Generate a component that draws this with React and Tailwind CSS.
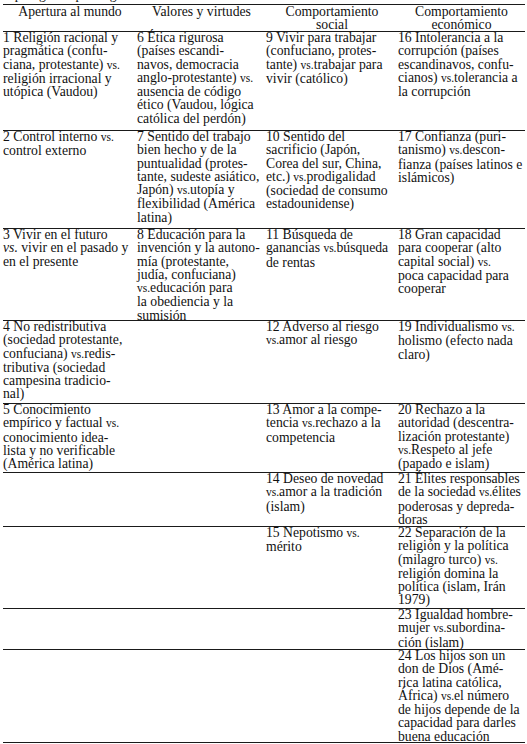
import React from 'react';

const rows = [
  {
    h: 'h-[99px]',
    cells: [
      ['1 Religión racional y', 'pragmática (confu-', 'ciana, protestante) vs.', 'religión irracional y', 'utópica (Vaudou)'],
      ['6 Ética rigurosa', '(países escandi-', 'navos, democracia', 'anglo-protestante) vs.', 'ausencia de código', 'ético (Vaudou, lógica', 'católica del perdón)'],
      ['9 Vivir para trabajar', '(confuciano, protes-', 'tante) vs.trabajar para', 'vivir (católico)'],
      ['16 Intolerancia a la', 'corrupción (países', 'escandinavos, confu-', 'cianos) vs.tolerancia a', 'la corrupción'],
    ],
  },
  {
    h: 'h-[98px]',
    cells: [
      ['2 Control interno vs.', 'control externo'],
      ['7 Sentido del trabajo', 'bien hecho y de la', 'puntualidad (protes-', 'tante, sudeste asiático,', 'Japón) vs.utopía y', 'flexibilidad (América', 'latina)'],
      ['10 Sentido del', 'sacrificio (Japón,', 'Corea del sur, China,', 'etc.) vs.prodigalidad', '(sociedad de consumo', 'estadounidense)'],
      ['17 Confianza (puri-', 'tanismo) vs.descon-', 'fianza (países latinos e', 'islámicos)'],
    ],
  },
  {
    h: 'h-[92px]',
    cells: [
      ['3 Vivir en el futuro', '_vs. vivir en el pasado y', 'en el presente'],
      ['8 Educación para la', 'invención y la autono-', 'mía (protestante,', 'judía, confuciana)', 'vs.educación para', 'la obediencia y la', 'sumisión'],
      ['11 Búsqueda de', 'ganancias vs.búsqueda', 'de rentas'],
      ['18 Gran capacidad', 'para cooperar (alto', 'capital social) vs.', 'poca capacidad para', 'cooperar'],
    ],
  },
  {
    h: 'h-[83px]',
    cells: [
      ['4 No redistributiva', '(sociedad protestante,', 'confuciana) vs.redis-', 'tributiva (sociedad', 'campesina tradicio-', 'nal)'],
      [],
      ['12 Adverso al riesgo', 'vs.amor al riesgo'],
      ['19 Individualismo vs.', 'holismo (efecto nada', 'claro)'],
    ],
  },
  {
    h: 'h-[69px]',
    cells: [
      ['5 Conocimiento', 'empírico y factual vs.', 'conocimiento idea-', 'lista y no verificable', '(América latina)'],
      [],
      ['13 Amor a la compe-', 'tencia vs.rechazo a la', 'competencia'],
      ['20 Rechazo a la', 'autoridad (descentra-', 'lización protestante)', 'vs.Respeto al jefe', '(papado e islam)'],
    ],
  },
  {
    h: 'h-[54px]',
    cells: [
      [],
      [],
      ['14 Deseo de novedad', 'vs.amor a la tradición', '(islam)'],
      ['21 Élites responsables', 'de la sociedad vs.élites', 'poderosas y depreda-', 'doras'],
    ],
  },
  {
    h: 'h-[82px]',
    cells: [
      [],
      [],
      ['15 Nepotismo vs.', 'mérito'],
      ['22 Separación de la', 'religión y la política', '(milagro turco) vs.', 'religión domina la', 'política (islam, Irán', '1979)'],
    ],
  },
  {
    h: 'h-[41px]',
    cells: [[], [], [], ['23 Igualdad hombre-', 'mujer vs.subordina-', 'ción (islam)']],
  },
  {
    h: 'h-[93px]',
    cells: [
      [],
      [],
      [],
      ['24 Los hijos son un', 'don de Dios (Amé-', 'rica latina católica,', 'África) vs.el número', 'de hijos depende de la', 'capacidad para darles', 'buena educación'],
    ],
  },
];

// "vs." is set a little smaller in the source; a leading "_" marks the italic one
function Line({ text }) {
  if (text.startsWith('_vs.')) {
    return (
      <div className="whitespace-nowrap">
        <span className="italic">vs.</span>
        {text.slice(4)}
      </div>
    );
  }
  const parts = text.split('vs.');
  return (
    <div className="whitespace-nowrap">
      {parts.map((p, i) => (
        <React.Fragment key={i}>
          {i > 0 && <span className="text-[11.5px]">vs.</span>}
          {p}
        </React.Fragment>
      ))}
    </div>
  );
}

export default function App() {
  return (
    <div
      className="w-[527px] h-[744px] overflow-hidden bg-white text-[#111] text-[13.7px] leading-[13.3px]"
      style={{ fontFamily: '"Liberation Serif", "Times New Roman", serif' }}
    >
      <div className="h-[4px] overflow-hidden pl-[3px]">
        <div className="-mt-[12px]">Tipología de paradigmas</div>
      </div>
      <div className="ml-[3px] w-[522px] border-t border-[#1a1a1a]">
        <div className="grid grid-cols-[134px_129px_132px_127px] h-[27px] border-b border-[#1a1a1a] text-center">
          <div>Apertura al mundo</div>
          <div>Valores y virtudes</div>
          <div>
            <div>Comportamiento</div>
            <div>social</div>
          </div>
          <div>
            <div>Comportamiento</div>
            <div>económico</div>
          </div>
        </div>
        {rows.map((row, ri) => (
          <div
            key={ri}
            className={`grid grid-cols-[134px_129px_132px_127px] border-b border-[#1a1a1a] ${row.h}`}
          >
            {row.cells.map((lines, ci) => (
              <div key={ci} className="-mt-[1px]">
                {lines.map((l, li) => (
                  <Line key={li} text={l} />
                ))}
              </div>
            ))}
          </div>
        ))}
      </div>
    </div>
  );
}
